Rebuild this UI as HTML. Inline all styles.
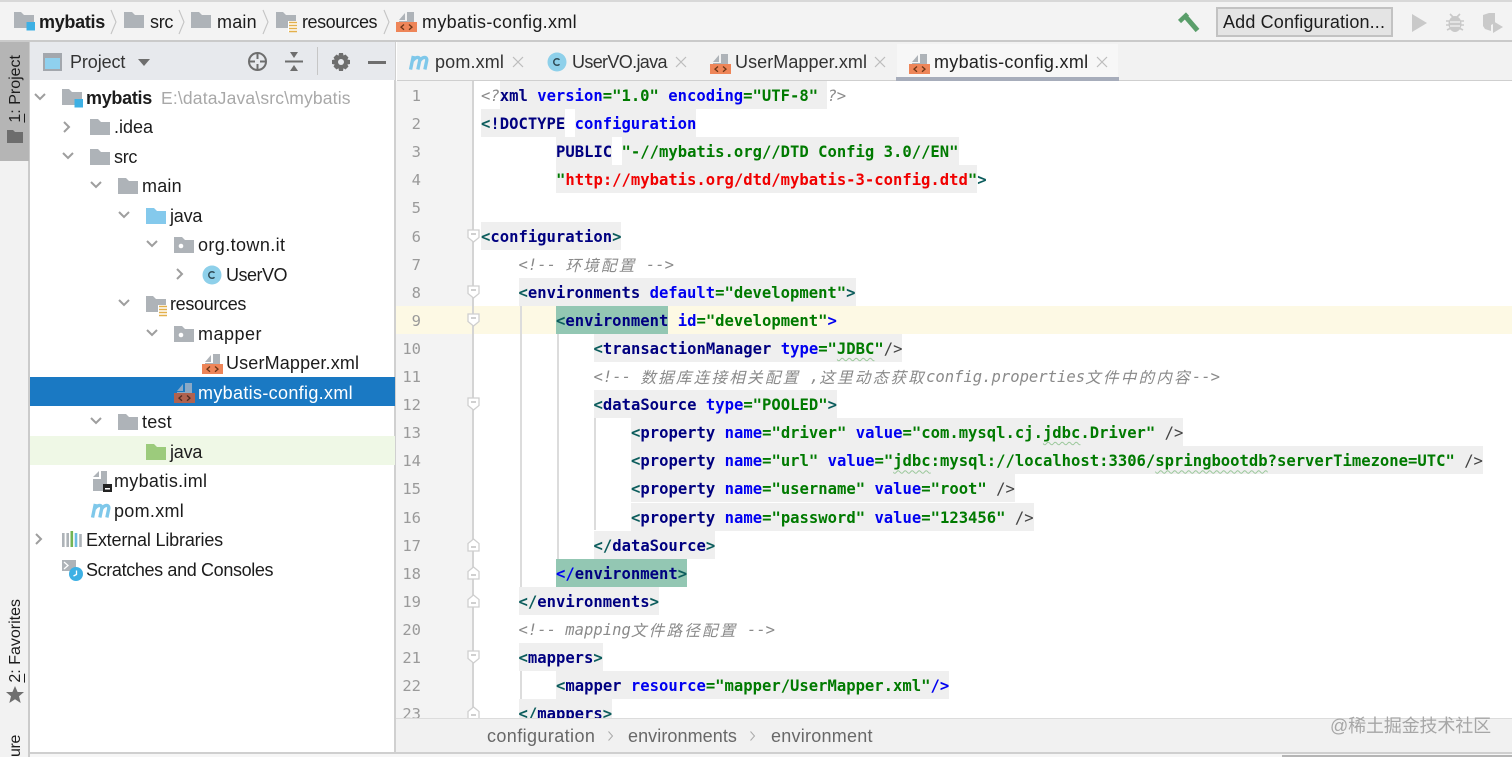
<!DOCTYPE html>
<html><head><meta charset="utf-8"><style>
*{box-sizing:border-box}
html{margin:0;padding:0;width:1512px;height:757px;overflow:hidden}
body{margin:0;padding:0;width:1512px;height:757px;background:#fff;font-family:"Liberation Sans","Noto Sans CJK SC",sans-serif;font-size:18px;color:#1c1c1c}
#root{position:absolute;left:0;top:0;width:1512px;height:757px;overflow:hidden;contain:paint}
.a{position:absolute}
.t{position:absolute;line-height:24px;height:24px;white-space:pre}
svg{position:absolute;overflow:visible}
#ed{position:absolute;left:396px;top:81px;width:1116px;height:637px;overflow:hidden}
.l{position:absolute;height:28px;line-height:30px;white-space:pre;font-family:"DejaVu Sans Mono","Noto Sans CJK SC",monospace;font-size:15.56px;font-weight:bold;color:#000080}
.l span{display:inline-block;height:28px;line-height:30px;vertical-align:top}
.l span span{display:inline}
.b{background:#efefef}
.h{background:#93c7b3}
.n{color:#000080}.k{color:#0000f0}.v{color:#007a00}.r{color:#f00000}.p{color:#0b5c5c}.s{color:#444;font-weight:normal}.d{color:#0a0a80}
.c{color:#8a8a8a;font-style:italic;font-weight:normal}
.z{font-family:"Noto Sans CJK SC",sans-serif;letter-spacing:2.2px;font-size:15.6px}
.w{text-decoration:underline wavy #9ac79a 1px;text-underline-offset:3px}
.g{position:absolute;width:24px;text-align:right;left:1px;height:28px;line-height:30px;color:#9a9a9a;font-family:"DejaVu Sans Mono",monospace;font-size:15.5px}
.i{position:absolute;width:1.5px;background:#dcdcdc}
.vt{position:absolute;writing-mode:vertical-rl;transform:rotate(180deg);line-height:20px;white-space:pre;font-size:16px;color:#1c1c1c}
</style></head><body><div id="root">
<svg width="0" height="0" style="position:absolute"><defs>
<symbol id="fo" viewBox="0 0 20 16"><path d="M0 0h8l3 3h9v13H0z" fill="#aeb3b8"/></symbol>
<symbol id="fb" viewBox="0 0 20 16"><path d="M0 0h8l3 3h9v13H0z" fill="#84c9ec"/></symbol>
<symbol id="fg" viewBox="0 0 20 16"><path d="M0 0h8l3 3h9v13H0z" fill="#9ccb7c"/></symbol>
<symbol id="fp" viewBox="0 0 20 16"><path d="M0 0h8l3 3h9v13H0z" fill="#aeb3b8"/><circle cx="7" cy="9" r="2.3" fill="#fff"/></symbol>
<symbol id="fm" viewBox="0 0 21 21"><path d="M0 0h7l3 3h10v13H0z" fill="#aeb3b8"/><rect x="12.5" y="10" width="8.5" height="8.5" fill="#3db0e4"/></symbol>
<symbol id="fr" viewBox="0 0 21 21"><path d="M0 0h7l3 3h10v13H0z" fill="#aeb3b8"/><rect x="12" y="9" width="9" height="11" fill="#fff"/><path d="M13 10.5h8M13 13.5h8M13 16.5h8M13 19.5h8" stroke="#e3b04c" stroke-width="1.6"/></symbol>
<symbol id="xm" viewBox="0 0 21 20"><path d="M3 8 9 1v7zM11 0h7v10h-7z" fill="#aeb3b8"/><path d="M3 9h15v2H3z" fill="#aeb3b8"/><rect y="10" width="21" height="10" fill="#ee8558"/><path d="M8 12.5l-3 2.6 3 2.6M13 12.5l3 2.6-3 2.6" stroke="#6b3516" stroke-width="1.3" fill="none"/></symbol>
<symbol id="xs" viewBox="0 0 21 20"><path d="M3 8 9 1v7zM11 0h7v10h-7z" fill="#8aa9c6"/><path d="M3 9h15v2H3z" fill="#8aa9c6"/><rect y="10" width="21" height="10" fill="#b0624f"/><path d="M8 12.5l-3 2.6 3 2.6M13 12.5l3 2.6-3 2.6" stroke="#4e2a22" stroke-width="1.3" fill="none"/></symbol>
<symbol id="mv" viewBox="0 0 22 16"><path d="M2.500 15.500 5.500 1M5 6C8 1.500 13 1.500 12.300 6L10.300 15.500M12.500 6C15.500 1.500 20.500 1.500 19.800 6L17.800 15.500" stroke="#7fc8ea" stroke-width="3.600" fill="none"/></symbol>
<symbol id="cc" viewBox="0 0 20 20"><circle cx="10" cy="10" r="9.500" fill="#8ed0ea"/><path d="M12.500 7.800A3.300 3.300 0 1 0 12.500 12.200" stroke="#2f4a55" stroke-width="1.500" fill="none"/></symbol>
<symbol id="fd" viewBox="0 0 13 14"><path d="M1 1h11v7.500L6.500 13 1 8.500z" fill="#fff" stroke="#cfcfcf" stroke-width="1.300"/><path d="M4 5h5" stroke="#aaa" stroke-width="1.100"/></symbol>
<symbol id="fu" viewBox="0 0 13 14"><path d="M1 13h11V5.500L6.500 1 1 5.500z" fill="#fff" stroke="#cfcfcf" stroke-width="1.300"/><path d="M4 9h5" stroke="#aaa" stroke-width="1.100"/></symbol>
<symbol id="cd" viewBox="0 0 12 8"><path d="M1 1l5 5 5-5" stroke="#9e9e9e" stroke-width="2" fill="none"/></symbol>
<symbol id="cr" viewBox="0 0 8 12"><path d="M1 1l5 5-5 5" stroke="#9e9e9e" stroke-width="2" fill="none"/></symbol>
<symbol id="sp" viewBox="0 0 8 26"><path d="M1 1l5 12L1 25" stroke="#c4c4c4" stroke-width="1.100" fill="none"/></symbol>
<symbol id="xx" viewBox="0 0 12 12"><path d="M1 1l10 10M11 1 1 11" stroke="#bdbdbd" stroke-width="1.200"/></symbol>
</defs></svg>

<!-- top bar -->
<div class="a" style="left:0;top:0;width:1512px;height:42px;background:#f3f3f3;border-top:2px solid #d8d8d8;border-bottom:2px solid #cacaca"></div>
<svg style="left:14px;top:12px" width="21" height="21"><use href="#fm"/></svg>
<div class="t" style="left:39px;top:10px;font-weight:bold;letter-spacing:-.3px">mybatis</div>
<svg style="left:110px;top:9px" width="8" height="26"><use href="#sp"/></svg>
<svg style="left:124px;top:12px" width="20" height="16"><use href="#fo"/></svg>
<div class="t" style="left:150px;top:10px;letter-spacing:-.3px">src</div>
<svg style="left:178px;top:9px" width="8" height="26"><use href="#sp"/></svg>
<svg style="left:191px;top:12px" width="20" height="16"><use href="#fo"/></svg>
<div class="t" style="left:217px;top:10px;letter-spacing:.2px">main</div>
<svg style="left:262px;top:9px" width="8" height="26"><use href="#sp"/></svg>
<svg style="left:276px;top:12px" width="21" height="21"><use href="#fr"/></svg>
<div class="t" style="left:302px;top:10px;letter-spacing:-.44px">resources</div>
<svg style="left:383px;top:9px" width="8" height="26"><use href="#sp"/></svg>
<svg style="left:396px;top:12px" width="21" height="20"><use href="#xm"/></svg>
<div class="t" style="left:422px;top:10px;letter-spacing:.33px">mybatis-config.xml</div>
<svg style="left:1178px;top:12px" width="22" height="21" viewBox="0 0 22 21"><path d="M1.500 9.500 9.500 2" stroke="#5a9e6a" stroke-width="4.500" fill="none"/><path d="M7 4 19.500 18.500" stroke="#5a9e6a" stroke-width="5" fill="none"/></svg>
<div class="a" style="left:1216px;top:7px;width:177px;height:30px;background:#e4e4e4;border:2px solid #c2c2c2"></div>
<div class="t" style="left:1223px;top:10px;letter-spacing:.15px">Add Configuration...</div>
<svg style="left:1412px;top:14px" width="15" height="18"><path d="M0 0l15 9-15 9z" fill="#c9c9c9"/></svg>
<svg style="left:1446px;top:12px" width="18" height="21" viewBox="0 0 18 21"><ellipse cx="9" cy="12" rx="6.500" ry="8" fill="#c9c9c9"/><path d="M4 2l3 3M14 2l-3 3M0 9h18M0 13h18M1 18l4-2M17 18l-4-2" stroke="#c9c9c9" stroke-width="1.600"/><path d="M4 10h10M4 14h10" stroke="#f3f3f3" stroke-width="1.300"/></svg>
<svg style="left:1482px;top:13px" width="21" height="21" viewBox="0 0 21 21"><path d="M1 2 7 0h6v10l-4 2v6L3 16 1 13z" fill="#c9c9c9"/><path d="M11 8l10 6-10 6z" fill="#c9c9c9"/></svg>

<!-- left stripe -->
<div class="a" style="left:0;top:42px;width:30px;height:715px;background:#f2f2f2;border-right:2px solid #cbcbcb"></div>
<div class="a" style="left:0;top:42px;width:29px;height:119px;background:#b5b5b5"></div>
<div class="vt" style="left:6px;top:55px"><span style="text-decoration:underline">1</span>: Project</div>
<svg style="left:7px;top:130px" width="16" height="13"><path d="M0 0h6l2 2h8v11H0z" fill="#6d6d6d"/></svg>
<div class="vt" style="left:6px;top:599px"><span style="text-decoration:underline">2</span>: Favorites</div>
<svg style="left:6px;top:686px" width="18" height="17" viewBox="0 0 18 17"><path d="M9 0l2.600 6H18l-5 4.300L14.700 17 9 13.300 3.300 17 5 10.300 0 6h6.400z" fill="#6f6f6f"/></svg>
<div class="vt" style="left:6px;top:735px;letter-spacing:-.4px">ure</div>

<!-- project panel -->
<div class="a" style="left:30px;top:42px;width:366px;height:711px;background:#fff;border-right:2px solid #d0d0d0"></div>
<div class="a" style="left:30px;top:754px;width:1482px;height:3px;background:#f6f6f6"></div>
<div class="a" style="left:30px;top:42px;width:365px;height:38px;background:#e7e9ed"></div>
<svg style="left:43px;top:53px" width="19" height="18"><rect x="1" y="1" width="17" height="16" fill="#8fd0ee" stroke="#a3a7ad" stroke-width="2"/><rect x="1" y="1" width="17" height="4" fill="#a3a7ad"/></svg>
<div class="t" style="left:70px;top:50px;color:#333;letter-spacing:-.1px">Project</div>
<svg style="left:138px;top:59px" width="12" height="7"><path d="M0 0h12L6 7z" fill="#6e6e6e"/></svg>
<svg style="left:247px;top:51px" width="21" height="21" viewBox="0 0 21 21"><circle cx="10.500" cy="10.500" r="8.500" fill="none" stroke="#6e6e6e" stroke-width="2"/><path d="M10.500 2v6M10.500 13v6M2 10.500h6M13 10.500h6" stroke="#6e6e6e" stroke-width="2"/></svg>
<svg style="left:285px;top:52px" width="18" height="19" viewBox="0 0 18 19"><path d="M0 9.500h18" stroke="#6e6e6e" stroke-width="2"/><path d="M5 0h8L9 6zM5 19h8L9 13z" fill="#6e6e6e"/></svg>
<div class="a" style="left:317px;top:47px;width:1px;height:28px;background:#c6c6c6"></div>
<svg style="left:332px;top:53px" width="18" height="18" viewBox="0 0 18 18"><path d="M7 0h4l.5 2.500 2-1 3 3-1.200 2L18 7v4l-2.700.5 1.200 2-3 3-2-1.200L11 18H7l-.5-2.700-2 1.200-3-3 1.200-2L0 11V7l2.700-.5-1.200-2 3-3 2 1.200z" fill="#6e6e6e"/><circle cx="9" cy="9" r="3" fill="#e7e9ed"/></svg>
<div class="a" style="left:368px;top:61px;width:18px;height:2.500px;background:#6e6e6e"></div>

<div class="a" style="left:30px;top:377px;width:365px;height:29px;background:#1a79c3"></div>
<div class="a" style="left:30px;top:436px;width:365px;height:29px;background:#eff8e6"></div>

<svg style="left:34px;top:93px" width="12" height="8"><use href="#cd"/></svg>
<svg style="left:62px;top:89px" width="21" height="21"><use href="#fm"/></svg>
<div class="t" style="left:86px;top:86px;font-weight:bold;letter-spacing:-.3px">mybatis</div>
<div class="t" style="left:161px;top:86px;color:#a8a8a8;font-size:17.500px;letter-spacing:.17px">E:\dataJava\src\mybatis</div>

<svg style="left:63px;top:121px" width="8" height="12"><use href="#cr"/></svg>
<svg style="left:90px;top:119px" width="20" height="16"><use href="#fo"/></svg>
<div class="t" style="left:114px;top:115px">.idea</div>

<svg style="left:62px;top:152px" width="12" height="8"><use href="#cd"/></svg>
<svg style="left:90px;top:149px" width="20" height="16"><use href="#fo"/></svg>
<div class="t" style="left:114px;top:145px;letter-spacing:-.3px">src</div>

<svg style="left:90px;top:181px" width="12" height="8"><use href="#cd"/></svg>
<svg style="left:118px;top:178px" width="20" height="16"><use href="#fo"/></svg>
<div class="t" style="left:142px;top:174px;letter-spacing:.2px">main</div>

<svg style="left:118px;top:211px" width="12" height="8"><use href="#cd"/></svg>
<svg style="left:146px;top:208px" width="20" height="16"><use href="#fb"/></svg>
<div class="t" style="left:170px;top:204px;letter-spacing:-.2px">java</div>

<svg style="left:146px;top:240px" width="12" height="8"><use href="#cd"/></svg>
<svg style="left:174px;top:237px" width="20" height="16"><use href="#fp"/></svg>
<div class="t" style="left:198px;top:233px;letter-spacing:.4px">org.town.it</div>

<svg style="left:176px;top:268px" width="8" height="12"><use href="#cr"/></svg>
<svg style="left:202px;top:265px" width="20" height="20"><use href="#cc"/></svg>
<div class="t" style="left:226px;top:263px;letter-spacing:-.5px">UserVO</div>

<svg style="left:118px;top:299px" width="12" height="8"><use href="#cd"/></svg>
<svg style="left:146px;top:296px" width="21" height="21"><use href="#fr"/></svg>
<div class="t" style="left:170px;top:292px;letter-spacing:-.33px">resources</div>

<svg style="left:146px;top:329px" width="12" height="8"><use href="#cd"/></svg>
<svg style="left:174px;top:326px" width="20" height="16"><use href="#fp"/></svg>
<div class="t" style="left:198px;top:322px;letter-spacing:.5px">mapper</div>

<svg style="left:202px;top:354px" width="21" height="20"><use href="#xm"/></svg>
<div class="t" style="left:226px;top:351px;letter-spacing:.15px">UserMapper.xml</div>

<svg style="left:174px;top:383px" width="21" height="20"><use href="#xs"/></svg>
<div class="t" style="left:198px;top:381px;color:#fff;letter-spacing:.33px">mybatis-config.xml</div>

<svg style="left:90px;top:417px" width="12" height="8"><use href="#cd"/></svg>
<svg style="left:118px;top:414px" width="20" height="16"><use href="#fo"/></svg>
<div class="t" style="left:142px;top:410px;letter-spacing:.2px">test</div>

<svg style="left:146px;top:444px" width="20" height="16"><use href="#fg"/></svg>
<div class="t" style="left:170px;top:440px;letter-spacing:-.2px">java</div>

<svg style="left:93px;top:471px" width="19" height="21" viewBox="0 0 19 21"><path d="M0 6l6-6v6zM8 0h6v11H8zM0 8h14v12H0z" fill="#aeb3b8"/><rect x="10" y="13" width="9" height="8" fill="#222"/><rect x="12" y="17" width="5" height="1.500" fill="#fff"/></svg>
<div class="t" style="left:114px;top:469px;letter-spacing:.3px">mybatis.iml</div>

<svg style="left:90px;top:503px" width="21" height="15"><use href="#mv"/></svg>
<div class="t" style="left:114px;top:499px;letter-spacing:.3px">pom.xml</div>

<svg style="left:35px;top:533px" width="8" height="12"><use href="#cr"/></svg>
<svg style="left:62px;top:531px" width="20" height="17" viewBox="0 0 20 17"><path d="M1.300 2v14" stroke="#aeb3b8" stroke-width="2.600"/><path d="M5.700 2v14" stroke="#aeb3b8" stroke-width="2.600"/><path d="M9.800 0v16" stroke="#72b454" stroke-width="2.600"/><path d="M14 2v14" stroke="#6cbbe0" stroke-width="2.600"/><path d="M18.500 3v13" stroke="#aeb3b8" stroke-width="2.600"/></svg>
<div class="t" style="left:86px;top:528px;letter-spacing:-.17px">External Libraries</div>

<svg style="left:62px;top:560px" width="21" height="21" viewBox="0 0 21 21"><rect width="14" height="11" fill="#aeb3b8"/><path d="M2 2l4 3.500L2 9" stroke="#fff" stroke-width="1.300" fill="none"/><circle cx="14" cy="14" r="7" fill="#3db0e4"/><path d="M14.500 10.500V14.500L11.500 16" stroke="#fff" stroke-width="1.300" fill="none"/></svg>
<div class="t" style="left:86px;top:558px;letter-spacing:-.36px">Scratches and Consoles</div>

<!-- tabs -->
<div class="a" style="left:397px;top:42px;width:1115px;height:39px;background:#f2f2f2;border-bottom:1px solid #cfcfcf"></div>
<div class="a" style="left:897px;top:44px;width:221px;height:37px;background:#f7f7f7"></div>
<div class="a" style="left:896px;top:77px;width:223px;height:4px;background:#a7adbb"></div>
<svg style="left:408px;top:55px" width="21" height="15"><use href="#mv"/></svg>
<div class="t" style="left:435px;top:50px;color:#333;letter-spacing:.15px">pom.xml</div>
<svg style="left:512px;top:56px" width="12" height="12"><use href="#xx"/></svg>
<svg style="left:547px;top:52px" width="20" height="20"><use href="#cc"/></svg>
<div class="t" style="left:572px;top:50px;color:#333;letter-spacing:-.65px">UserVO.java</div>
<svg style="left:675px;top:56px" width="12" height="12"><use href="#xx"/></svg>
<svg style="left:710px;top:54px" width="21" height="20"><use href="#xm"/></svg>
<div class="t" style="left:735px;top:50px;color:#333;letter-spacing:.07px">UserMapper.xml</div>
<svg style="left:874px;top:56px" width="12" height="12"><use href="#xx"/></svg>
<svg style="left:909px;top:54px" width="21" height="20"><use href="#xm"/></svg>
<div class="t" style="left:934px;top:50px;color:#222;letter-spacing:.3px">mybatis-config.xml</div>
<svg style="left:1096px;top:56px" width="12" height="12"><use href="#xx"/></svg>

<!-- editor -->
<div id="ed">
<div class="a" style="left:0;top:0;width:77px;height:637px;background:#f3f3f3"></div>
<div class="a" style="left:0;top:225px;width:1116px;height:28px;background:#fdf9e4"></div>
<div class="a" style="left:76px;top:0;width:1.500px;height:637px;background:#d4d4d4"></div>
<div class="i" style="left:124px;top:225px;height:283px"></div>
<div class="i" style="left:161px;top:253px;height:225px"></div>
<div class="i" style="left:198px;top:337px;height:112px"></div>
<div class="i" style="left:124px;top:590px;height:28px"></div>

<div class="g" style="top:0">1</div><div class="g" style="top:28.100px">2</div><div class="g" style="top:56.200px">3</div><div class="g" style="top:84.300px">4</div><div class="g" style="top:112.400px">5</div><div class="g" style="top:140.500px">6</div><div class="g" style="top:168.600px">7</div><div class="g" style="top:196.700px">8</div><div class="g" style="top:224.800px">9</div><div class="g" style="top:252.900px">10</div><div class="g" style="top:281px">11</div><div class="g" style="top:309.100px">12</div><div class="g" style="top:337.200px">13</div><div class="g" style="top:365.300px">14</div><div class="g" style="top:393.400px">15</div><div class="g" style="top:421.500px">16</div><div class="g" style="top:449.600px">17</div><div class="g" style="top:477.700px">18</div><div class="g" style="top:505.800px">19</div><div class="g" style="top:533.900px">20</div><div class="g" style="top:562px">21</div><div class="g" style="top:590.100px">22</div><div class="g" style="top:618.200px">23</div>

<svg style="left:71px;top:148px" width="13" height="14"><use href="#fd"/></svg>
<svg style="left:71px;top:204px" width="13" height="14"><use href="#fd"/></svg>
<svg style="left:71px;top:232px" width="13" height="14"><use href="#fd"/></svg>
<svg style="left:71px;top:316px" width="13" height="14"><use href="#fd"/></svg>
<svg style="left:71px;top:457px" width="13" height="14"><use href="#fu"/></svg>
<svg style="left:71px;top:485px" width="13" height="14"><use href="#fu"/></svg>
<svg style="left:71px;top:513px" width="13" height="14"><use href="#fu"/></svg>
<svg style="left:71px;top:569px" width="13" height="14"><use href="#fd"/></svg>
<svg style="left:71px;top:625px" width="13" height="14"><use href="#fu"/></svg>

<div class="l" style="left:85px;top:0"><span class="c">&lt;?</span><span class="b"><span class="n">xml</span> <span class="k">version</span><span class="v">="1.0"</span> <span class="k">encoding</span><span class="v">="UTF-8"</span> </span><span class="c">?&gt;</span></div>
<div class="l" style="left:85px;top:28.100px"><span class="b"><span class="p">&lt;</span><span class="n">!DOCTYPE</span></span> <span class="b"><span class="k">configuration</span></span></div>
<div class="l" style="left:160px;top:56.200px"><span class="b"><span class="n">PUBLIC</span></span> <span class="b"><span class="v">"-//mybatis.org//DTD Config 3.0//EN"</span></span></div>
<div class="l" style="left:160px;top:84.300px"><span class="b"><span class="v">"</span><span class="r">http://mybatis.org/dtd/mybatis-3-config.dtd</span><span class="v">"</span></span><span class="p">&gt;</span></div>
<div class="l" style="left:85px;top:140.500px"><span class="b"><span class="p">&lt;</span><span class="n">configuration</span><span class="p">&gt;</span></span></div>
<div class="l" style="left:122.500px;top:168.600px"><span class="c">&lt;!-- <span class="z">环境配置</span> --&gt;</span></div>
<div class="l" style="left:122.500px;top:196.700px"><span class="b"><span class="p">&lt;</span><span class="n">environments</span> <span class="k">default</span><span class="v">="development"</span><span class="p">&gt;</span></span></div>
<div class="l" style="left:160px;top:224.800px"><span class="h"><span class="p">&lt;</span><span class="n">environment</span></span> <span class="k">id</span><span class="v">="development"</span><span class="k">&gt;</span></div>
<div class="l" style="left:197.500px;top:252.900px"><span class="b"><span class="p">&lt;</span><span class="n">transactionManager</span> <span class="k">type</span><span class="v">="<span class="w">JDBC</span>"</span><span class="s">/&gt;</span></span></div>
<div class="l" style="left:197.500px;top:281px"><span class="c">&lt;!-- <span class="z">数据库连接相关配置</span> ,<span class="z">这里动态获取</span>config.properties<span class="z">文件中的内容</span>--&gt;</span></div>
<div class="l" style="left:197.500px;top:309.100px"><span class="b"><span class="p">&lt;</span><span class="n">dataSource</span> <span class="k">type</span><span class="v">="POOLED"</span><span class="p">&gt;</span></span></div>
<div class="l" style="left:235px;top:337.200px"><span class="b"><span class="p">&lt;</span><span class="n">property</span> <span class="k">name</span><span class="v">="driver"</span> <span class="k">value</span><span class="v">="com.mysql.cj.<span class="w">jdbc</span>.Driver"</span> <span class="s">/&gt;</span></span></div>
<div class="l" style="left:235px;top:365.300px"><span class="b"><span class="p">&lt;</span><span class="n">property</span> <span class="k">name</span><span class="v">="url"</span> <span class="k">value</span><span class="v">="<span class="w">jdbc</span>:mysql://localhost:3306/<span class="w">springbootdb</span>?serverTimezone=UTC"</span> <span class="s">/&gt;</span></span></div>
<div class="l" style="left:235px;top:393.400px"><span class="b"><span class="p">&lt;</span><span class="n">property</span> <span class="k">name</span><span class="v">="username"</span> <span class="k">value</span><span class="v">="root"</span> <span class="s">/&gt;</span></span></div>
<div class="l" style="left:235px;top:421.500px"><span class="b"><span class="p">&lt;</span><span class="n">property</span> <span class="k">name</span><span class="v">="password"</span> <span class="k">value</span><span class="v">="123456"</span> <span class="s">/&gt;</span></span></div>
<div class="l" style="left:197.500px;top:449.600px"><span class="b"><span class="p">&lt;/</span><span class="n">dataSource</span><span class="p">&gt;</span></span></div>
<div class="l" style="left:160px;top:477.700px"><span class="h"><span class="k">&lt;/</span><span class="n">environment</span><span class="p">&gt;</span></span></div>
<div class="l" style="left:122.500px;top:505.800px"><span class="b"><span class="p">&lt;/</span><span class="n">environments</span><span class="p">&gt;</span></span></div>
<div class="l" style="left:122.500px;top:533.900px"><span class="c">&lt;!-- mapping<span class="z">文件路径配置</span> --&gt;</span></div>
<div class="l" style="left:122.500px;top:562px"><span class="b"><span class="p">&lt;</span><span class="n">mappers</span><span class="p">&gt;</span></span></div>
<div class="l" style="left:160px;top:590.100px"><span class="b"><span class="p">&lt;</span><span class="n">mapper</span> <span class="k">resource</span><span class="v">="mapper/UserMapper.xml"</span><span class="k">/&gt;</span></span></div>
<div class="l" style="left:122.500px;top:618.200px"><span class="b"><span class="p">&lt;/</span><span class="n">mappers</span><span class="p">&gt;</span></span></div>
</div>

<!-- bottom breadcrumb -->
<div class="a" style="left:396px;top:718px;width:1116px;height:36px;background:#f1f1f1;border-top:1px solid #dcdcdc;border-bottom:2px solid #cfcfcf"></div>
<div class="a" style="left:30px;top:752px;width:366px;height:2px;background:#cfcfcf"></div>
<div class="a" style="left:1282px;top:755px;width:230px;height:2px;background:#b5b5b5"></div>
<div class="t" style="left:487px;top:724px;color:#686868;letter-spacing:.4px">configuration</div>
<svg style="left:608px;top:731px" width="5" height="10"><path d="M.5.500l4 4.500-4 4.500" stroke="#aaa" fill="none"/></svg>
<div class="t" style="left:628px;top:724px;color:#686868;letter-spacing:.08px">environments</div>
<svg style="left:750px;top:731px" width="5" height="10"><path d="M.5.500l4 4.500-4 4.500" stroke="#aaa" fill="none"/></svg>
<div class="t" style="left:771px;top:724px;color:#686868;letter-spacing:.25px">environment</div>
<div class="t" style="left:1330px;top:714px;color:#a6a6a6;font-size:18px;letter-spacing:-.15px">@稀土掘金技术社区</div>
</div></body></html>
